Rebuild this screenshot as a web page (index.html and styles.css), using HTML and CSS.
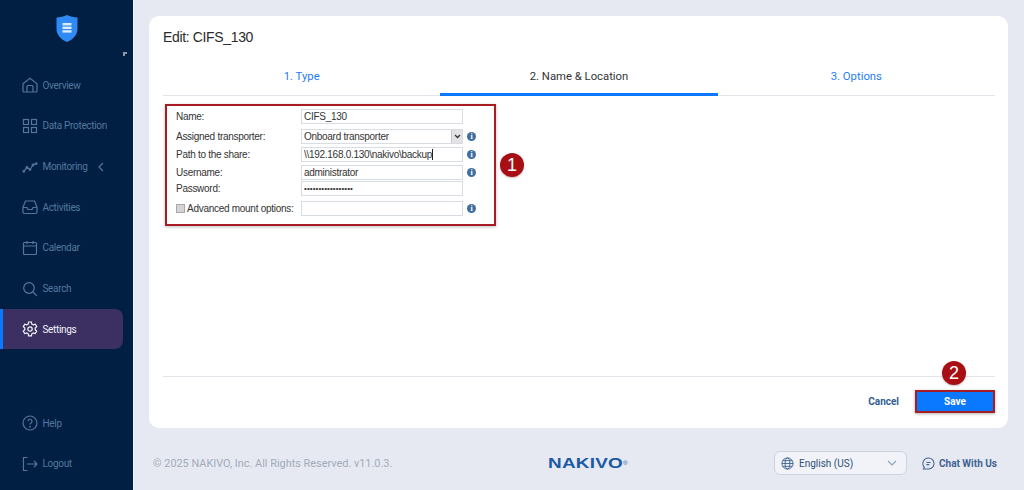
FILE: index.html
```html
<!DOCTYPE html>
<html lang="en">
<head>
<meta charset="utf-8">
<title>Edit: CIFS_130</title>
<link rel="stylesheet" href="styles.css">
</head>
<body>
<div class="app">
  <aside class="sidebar">
    <div class="brand">
      <svg width="22" height="28" viewBox="0 0 22 28"><path d="M11 0C14 1.500 18 2.300 21.500 2.500V14C21.500 20 16.500 25 11 27C5.500 25 .5 20 .5 14V2.500C4 2.300 8 1.500 11 0Z" fill="#2f8af5"/><rect x="6.500" y="8" width="9" height="2.400" fill="#dcebfb"/><rect x="6.500" y="11.600" width="9" height="2.400" fill="#dcebfb"/><rect x="6.500" y="15.200" width="9" height="2.400" fill="#dcebfb"/></svg>
    </div>
    <div class="collapse-row"><span class="collapse-mark"></span></div>
    <nav class="nav">
      <a class="nav-item"><svg class="nav-icon" viewBox="0 0 16 16"><path d="M1 6.800 8 1.300l7 5.500V14a1 1 0 0 1-1 1H2a1 1 0 0 1-1-1Z"/><path d="M5 15V9.500a1 1 0 0 1 1-1h4a1 1 0 0 1 1 1V15"/></svg><span>Overview</span></a>
      <a class="nav-item"><svg class="nav-icon" viewBox="0 0 16 16"><rect x="1.500" y="1.500" width="5" height="5"/><rect x="9.500" y="1.500" width="5" height="5"/><rect x="1.500" y="9.500" width="5" height="5"/><rect x="9.500" y="9.500" width="5" height="5"/></svg><span>Data Protection</span></a>
      <a class="nav-item"><svg class="nav-icon" viewBox="0 0 16 16"><path d="M1.500 12.500 5 8.500l3 2 3-4.500 3.500-1.500"/><circle cx="1.800" cy="12.300" r=".8"/><circle cx="5" cy="8.500" r=".8"/><circle cx="8" cy="10.500" r=".8"/><circle cx="11" cy="6" r=".8"/><circle cx="14.200" cy="4.600" r=".8"/></svg><span>Monitoring</span><svg class="nav-chevron" viewBox="0 0 6 10"><path d="M5 1 1 5l4 4"/></svg></a>
      <a class="nav-item"><svg class="nav-icon" viewBox="0 0 16 16"><path d="M3.500 2h9L15 8v5a1.500 1.500 0 0 1-1.500 1.500h-11A1.500 1.500 0 0 1 1 13V8Z"/><path d="M1 8.500h4l1 2h4l1-2h4"/></svg><span>Activities</span></a>
      <a class="nav-item"><svg class="nav-icon" viewBox="0 0 16 16"><rect x="1.500" y="2.500" width="13" height="12" rx="1"/><path d="M1.500 6h13M5 1v3M11 1v3"/></svg><span>Calendar</span></a>
      <a class="nav-item"><svg class="nav-icon" viewBox="0 0 16 16"><circle cx="7" cy="7" r="5.300"/><path d="m11 11 3.800 3.800"/></svg><span>Search</span></a>
      <a class="nav-item is-active"><svg class="nav-icon" viewBox="0 0 16 16"><path d="M6.600 1h2.800l.4 2 1.500.9 2-.7 1.400 2.400-1.500 1.400v1.800l1.500 1.400-1.400 2.400-2-.7-1.500.9-.4 2H6.600l-.4-2-1.500-.9-2 .7-1.400-2.400 1.500-1.400V7L1.300 5.600l1.400-2.400 2 .7 1.500-.9Z"/><circle cx="8" cy="8" r="2.200"/></svg><span>Settings</span></a>
    </nav>
    <div class="nav nav-bottom">
      <a class="nav-item"><svg class="nav-icon" viewBox="0 0 16 16"><circle cx="8" cy="8" r="7"/><path d="M6 6.200a2 2 0 1 1 3 1.800c-.7.400-1 .8-1 1.600"/><circle cx="8" cy="11.800" r=".4"/></svg><span>Help</span></a>
      <a class="nav-item"><svg class="nav-icon" viewBox="0 0 16 16"><path d="M5.500 1.500H1.500v13h4"/><path d="M5 8h10M12 5l3 3-3 3"/></svg><span>Logout</span></a>
    </div>
  </aside>

  <div class="content">
    <main class="card">
      <h1 class="title">Edit: CIFS_130</h1>
      <div class="tabs">
        <div class="tab">1. Type</div>
        <div class="tab is-current">2. Name &amp; Location</div>
        <div class="tab">3. Options</div>
      </div>
      <div class="form-wrap">
        <form class="form-box">
          <div class="row row-name"><span class="label">Name:</span><div class="field">CIFS_130</div></div>
          <div class="row row-g5"><span class="label">Assigned transporter:</span><div class="field field-select">Onboard transporter<span class="select-btn"><svg width="7" height="5" viewBox="0 0 7 5"><path d="M1 1l2.500 2.500L6 1"/></svg></span></div><span class="info">i</span></div>
          <div class="row row-g3"><span class="label">Path to the share:</span><div class="field">\\192.168.0.130\nakivo\backup<span class="caret"></span></div><span class="info">i</span></div>
          <div class="row row-g3"><span class="label">Username:</span><div class="field">administrator</div><span class="info">i</span></div>
          <div class="row row-g1"><span class="label">Password:</span><div class="field field-pass">•••••••••••••••••</div></div>
          <div class="row row-g5"><span class="label label-check"><span class="checkbox"></span>Advanced mount options:</span><div class="field"></div><span class="info">i</span></div>
        </form>
        <span class="badge badge-one">1</span>
      </div>
      <div class="actions">
        <button class="btn-cancel" type="button">Cancel</button>
        <button class="btn-save" type="button">Save</button>
        <span class="badge badge-two">2</span>
      </div>
    </main>
    <footer class="footer">
      <div class="copyright">© 2025 NAKIVO, Inc. All Rights Reserved. v11.0.3.</div>
      <div class="logo">NAKIVO<sup class="logo-mark">®</sup></div>
      <div class="footer-right">
        <div class="lang">
          <svg class="lang-globe" viewBox="0 0 14 14"><circle cx="7" cy="7" r="6"/><ellipse cx="7" cy="7" rx="2.600" ry="6"/><path d="M1 7h12M1.800 4h10.400M1.800 10h10.400"/></svg>
          <span class="lang-text">English (US)</span>
          <svg class="lang-chevron" viewBox="0 0 10 6"><path d="M1 1l4 4 4-4"/></svg>
        </div>
        <div class="chat">
          <svg class="chat-icon" viewBox="0 0 14 14"><path d="M7 1a6 6 0 0 1 0 12H1.500l1-2A6 6 0 0 1 7 1Z"/><path d="M4.800 5.800h4.400M4.800 8.200h3"/></svg>
          <span>Chat With Us</span>
        </div>
      </div>
    </footer>
  </div>
</div>
</body>
</html>
```

FILE: styles.css
```css
* { box-sizing: border-box; }
html, body { margin: 0; height: 490px; overflow: hidden; }
body { font-family: "Liberation Sans", Arial, sans-serif; background: #e6e9f2; }
.app { display: flex; height: 490px; }

/* Sidebar */
.sidebar {
  width: 134px; flex: none; background: #001f42; border-right: 1px solid #f3f5fa;
  display: flex; flex-direction: column; font-family: Roboto, sans-serif;
}
.brand { height: 51px; padding: 15px 0 0 56px; }
.brand svg { display: block; }
.collapse-row { height: 14px; padding: 1px 0 0 123px; }
.collapse-mark { display: block; width: 4px; height: 4px; border-left: 2px solid #8d99a8; border-top: 2px solid #8d99a8; }
.nav { display: flex; flex-direction: column; }
.nav-bottom { margin-top: auto; padding-bottom: 6px; }
.nav-item {
  height: 40.650px; width: 123px; display: flex; align-items: center; gap: 5px; padding-left: 21.500px;
  color: #55779f; font-size: 10px; letter-spacing: -.32px; border-radius: 0 8px 8px 0;
}
.nav-icon { width: 16px; height: 16px; fill: none; stroke: #55759c; stroke-width: 1.200; flex: none; }
.nav-chevron { width: 6px; height: 10px; fill: none; stroke: #55759c; stroke-width: 1.200; margin-left: 5px; }
.is-active { background: #3b3061; color: #f2f4fa; border-left: 3px solid #0a78ff; padding-left: 18.500px; }
.is-active .nav-icon { stroke: #f2f4fa; }

/* Main */
.content { flex: 1; display: flex; flex-direction: column; padding: 16px 16px 0 15px; min-width: 0; }
.card {
  height: 412px; background: #fff; border-radius: 10px; padding: 0 13px 15px 14px;
  display: flex; flex-direction: column;
}
.title { margin: 13px 0 0; font-size: 14px; letter-spacing: -.35px; font-weight: 400; color: #2b2b2b; line-height: 16px; }
.tabs { display: grid; grid-template-columns: repeat(3, 1fr); margin-top: 17px; border-bottom: 1px solid #e2e5ea; height: 34px; }
.tab { text-align: center; font-size: 11.300px; color: #1f7df2; line-height: 16px; padding-top: 7px; font-family: Roboto, sans-serif; }
.tab.is-current { color: #333; border-bottom: 3px solid #0a78ff; height: 34px; }

.form-wrap { position: relative; flex: 1; padding: 8px 0 0 2px; }
.form-box {
  width: 331px; height: 122px; border: 2px solid #a81d24; padding: 3px 0 0 9px;
  box-shadow: 0 1px 3px rgba(0, 0, 0, .25); font-size: 10px; letter-spacing: -.28px; color: #333;
}
.row { display: flex; align-items: center; height: 15px; }
.row-g1 { margin-top: 1px; }
.row-g3 { margin-top: 3px; }
.row-g5 { margin-top: 5px; }
.label { width: 125px; flex: none; line-height: 13px; padding-bottom: 1px; }
.label-check { display: flex; align-items: center; gap: 2px; }
.field {
  width: 162px; height: 15px; border: 1px solid #d8dde3; padding: 0 2px; line-height: 13px;
  display: flex; align-items: center; color: #333; background: #fff; flex: none;
}
.field-select { position: relative; }
.select-btn {
  position: absolute; right: 0; top: 0; bottom: 0; width: 11px; background: #e3e3e3; border-left: 1px solid #c6c6c6;
  display: flex; align-items: center; justify-content: center;
}
.select-btn svg { fill: none; stroke: #333; stroke-width: 1.300; }
.caret { width: 1px; height: 11px; background: #222; }
.field-pass { font-size: 8px; letter-spacing: .08px; }
.checkbox { width: 9px; height: 9px; border: 1px solid #a9a9a9; background: #d4d4d4; flex: none; }
.info {
  width: 9px; height: 9px; margin-left: 4px; border-radius: 50%; background: #3f6f9f; color: #fff;
  font: 700 8px/9px "Liberation Serif", serif; letter-spacing: 0; text-align: center; flex: none;
}
.badge {
  position: absolute; width: 24px; height: 24px; border-radius: 50%; background: #a80f14; color: #fff;
  font: 400 18px/24px "Liberation Sans", sans-serif; text-align: center; box-shadow: 0 1px 2px rgba(0, 0, 0, .25);
}
.badge-one { left: 337px; top: 57px; }
.badge-two { right: 29px; top: -16px; }

.actions {
  position: relative; border-top: 1px solid #e2e5ea; height: 37px; display: flex; justify-content: flex-end;
  align-items: flex-end; gap: 16px; font-family: Roboto, sans-serif;
}
.btn-cancel { border: 0; background: none; padding: 0; color: #315d92; font: 700 10px/22px Roboto, sans-serif; }
.btn-save {
  width: 80px; height: 23px; background: #0a78ff; color: #fff; border: 2px solid #a81d24; padding: 0;
  font: 700 10px/19px Roboto, sans-serif; box-shadow: 0 1px 3px rgba(0, 0, 0, .3);
}

/* Footer */
.footer { flex: 1; display: flex; align-items: center; padding: 8px 0 0 4px; font-family: Roboto, sans-serif; }
.copyright { width: 395px; flex: none; font-size: 10.900px; color: #a3abba; white-space: nowrap; }
.logo { width: 226px; flex: none; font: 700 15px/16px "Liberation Sans", sans-serif; color: #1a5aa5; letter-spacing: .2px; transform: scaleX(1.260); transform-origin: left; }
.logo-mark { font-size: 5px; vertical-align: top; font-weight: 400; }
.footer-right { display: flex; align-items: center; gap: 15px; }
.lang {
  width: 133px; height: 24px; border: 1px solid #cdd3de; border-radius: 6px; background: #f1f3f8;
  display: flex; align-items: center; padding: 0 9px 0 6px; font-size: 10px; color: #2f4f77;
}
.lang-globe { width: 13px; height: 13px; fill: none; stroke: #2f5685; stroke-width: .9; flex: none; }
.lang-text { margin-left: 5px; flex: 1; }
.lang-chevron { width: 10px; height: 6px; fill: none; stroke: #8ba0ba; stroke-width: 1.100; }
.chat { display: flex; align-items: center; gap: 4px; font-size: 10px; font-weight: 700; color: #3f6391; white-space: nowrap; }
.chat-icon { width: 13px; height: 13px; fill: none; stroke: #3f6391; stroke-width: 1.100; flex: none; }
```
